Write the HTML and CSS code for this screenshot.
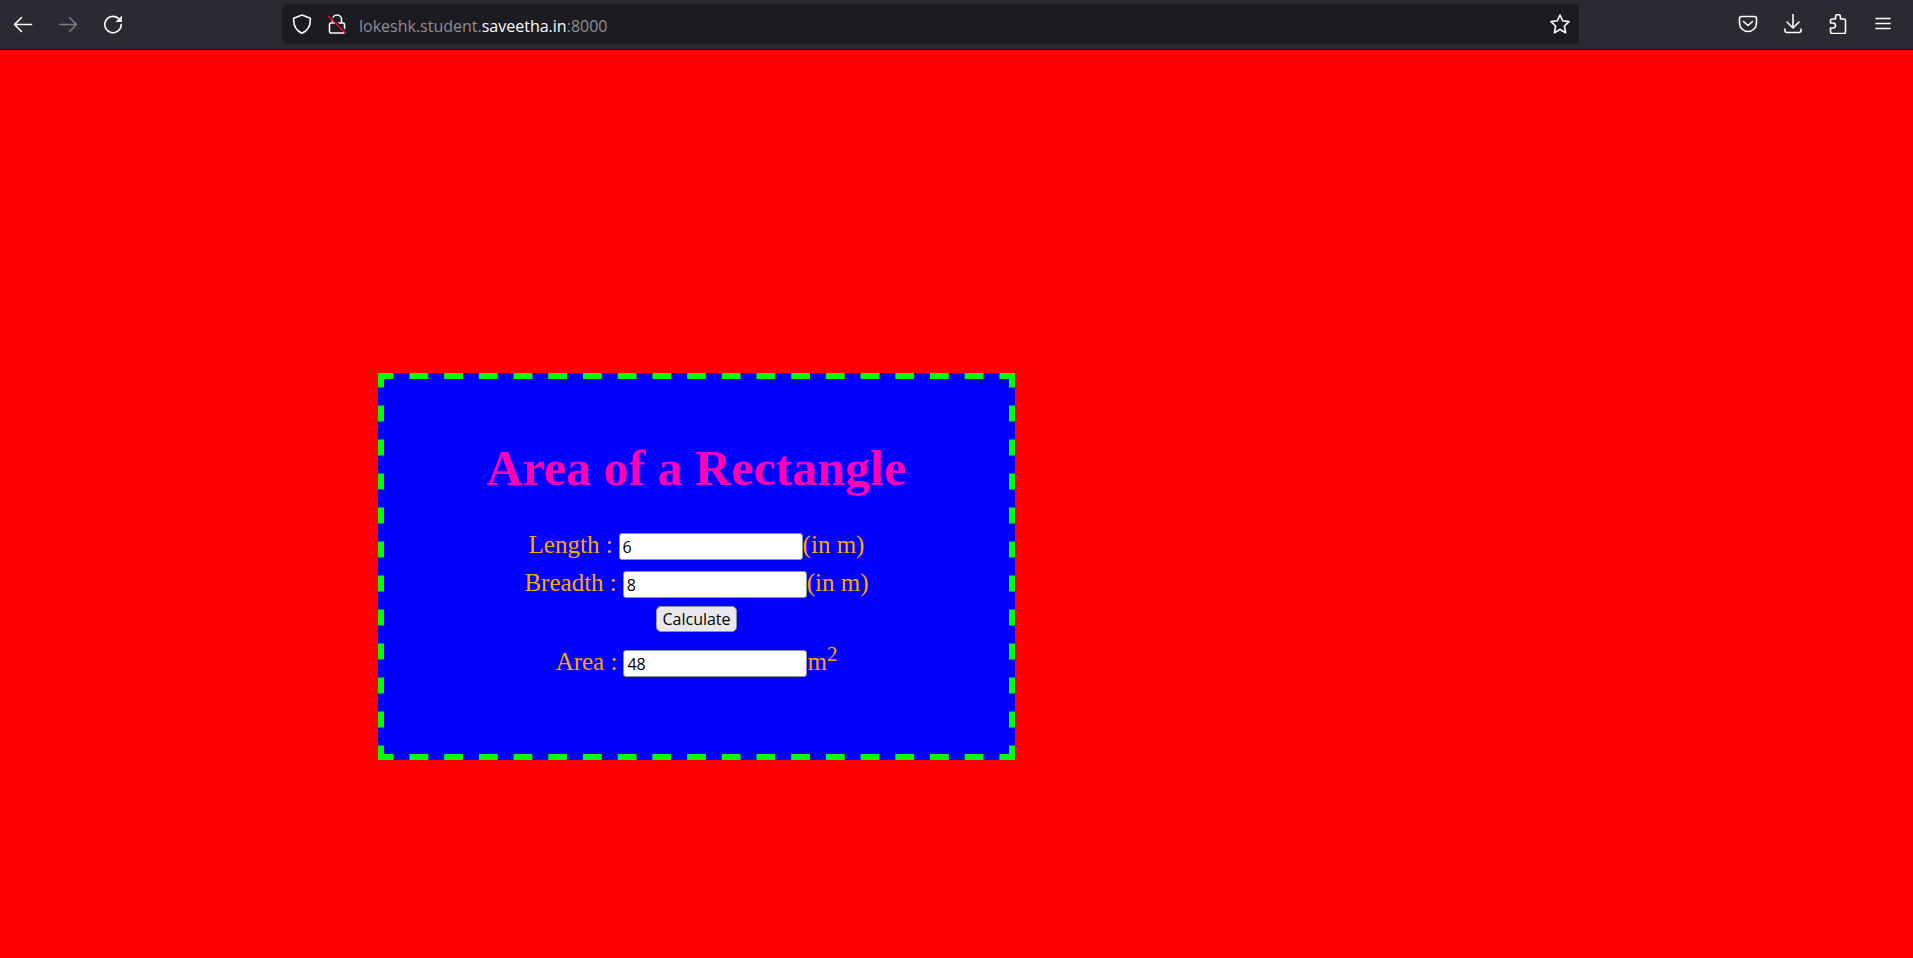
FILE: index.html
```html
<!DOCTYPE html>
<html lang="en">
<head>
<meta charset="utf-8">
<title>Area of a Rectangle</title>
<link rel="stylesheet" href="styles.css">
</head>
<body>
<header class="toolbar">
  <nav class="nav-buttons" aria-label="History">
    <button class="icon-button" type="button" aria-label="Back">
      <svg class="icon" viewBox="0 0 20 20"><path d="M18.500 10.500H2M8.500 3.500l-7 7 7 7"/></svg>
    </button>
    <button class="icon-button" type="button" aria-label="Forward" disabled>
      <svg class="icon" viewBox="0 0 20 20"><path d="M1.500 10.500H18M11.500 3.500l7 7-7 7"/></svg>
    </button>
    <button class="icon-button" type="button" aria-label="Reload">
      <svg class="icon" viewBox="0 0 20 20"><path d="M18.200 10.500a8.200 8.200 0 1 1-2.800-6.100"/><path class="solid" d="M19 1.500V8h-6.500z"/></svg>
    </button>
  </nav>
  <div class="address-bar">
    <button class="icon-button" type="button" aria-label="Tracking protection">
      <svg class="icon" viewBox="0 0 20 20"><path d="M10 .9 18.300 4.200C18.700 11 16 16.500 10 19.200 4 16.500 1.300 11 1.700 4.200z"/></svg>
    </button>
    <button class="icon-button" type="button" aria-label="Connection not secure">
      <svg class="icon" viewBox="0 0 20 20"><path d="M5.500 9V5.500a4.500 4.500 0 0 1 9 0V9M4 9h12q1.500 0 1.500 1.500v7q0 1.500-1.500 1.500H4q-1.500 0-1.500-1.500v-7Q2.500 9 4 9z"/><path class="strike-gap" d="M2.500 1.500 19.500 18"/><path class="strike" d="M1.500 2.500 18.500 19"/></svg>
    </button>
    <a class="url" href="#">lokeshk.student.<span class="domain">saveetha.in</span>:8000</a>
    <button class="icon-button" type="button" aria-label="Bookmark this page">
      <svg class="icon" viewBox="0 0 20 20"><path d="M10 1 12.700 6.800 19 7.600 14.400 12 15.600 18.700 10 15.500 4.400 18.700 5.600 12 1 7.600 7.300 6.800z"/></svg>
    </button>
  </div>
  <div class="tools">
    <button class="icon-button" type="button" aria-label="Save to Pocket">
      <svg class="icon" viewBox="0 0 20 20"><path d="M3.500 2.500h13q2 0 2 2V9a8.500 8.500 0 0 1-17 0V4.500q0-2 2-2zM5.500 7.500l4.500 4 4.500-4"/></svg>
    </button>
    <button class="icon-button" type="button" aria-label="Downloads">
      <svg class="icon" viewBox="0 0 20 20"><path d="M10 .5v13M4 8l6 6 6-6M2 15v1.500q0 2 2 2h12q2 0 2-2V15"/></svg>
    </button>
    <button class="icon-button" type="button" aria-label="Extensions">
      <svg class="icon" viewBox="0 0 20 20"><path d="M2.500 9V6.500q0-1.500 1.500-1.500h3.500V3a2.500 2.500 0 0 1 5 0v2H16q1.500 0 1.500 1.500V18q0 1.500-1.500 1.500H4q-1.500 0-1.500-1.500v-4H5a2.500 2.500 0 0 0 0-5z"/></svg>
    </button>
    <button class="icon-button" type="button" aria-label="Open menu">
      <svg class="icon" viewBox="0 0 20 20"><path d="M3 4.500h14M3 9.500h14M3 14.500h14"/></svg>
    </button>
  </div>
</header>
<main class="page">
  <form class="card">
    <h1 class="title">Area of a Rectangle</h1>
    <div class="row">
      <label for="length">Length :</label>
      <input class="field" id="length" type="text" value="6">
      <span>(in m)</span>
    </div>
    <div class="row">
      <label for="breadth">Breadth :</label>
      <input class="field" id="breadth" type="text" value="8">
      <span>(in m)</span>
    </div>
    <div class="row row-action">
      <button class="calculate" type="button">Calculate</button>
    </div>
    <div class="row">
      <label for="area">Area :</label>
      <input class="field" id="area" type="text" value="48">
      <span>m<sup>2</sup></span>
    </div>
  </form>
</main>
</body>
</html>
```
FILE: styles.css
```css
* {
  box-sizing: border-box;
}

body {
  margin: 0;
  min-height: 100vh;
  display: flex;
  flex-direction: column;
  background: #ff0000;
  font-family: "Liberation Serif", "Times New Roman", serif;
}

.toolbar {
  display: flex;
  align-items: center;
  height: 50px;
  padding: 0 15px 1px 8px;
  background: #2b2a33;
  border-bottom: 1px solid #0c0c0d;
}

.nav-buttons,
.tools {
  display: flex;
  gap: 15px;
}

.nav-buttons {
  margin-right: 154px;
}

.tools {
  margin-left: 154px;
}

.icon-button {
  display: flex;
  align-items: center;
  justify-content: center;
  width: 30px;
  height: 30px;
  padding: 0;
  border: 0;
  background: none;
  color: #fbfbfe;
}

.icon-button:disabled {
  color: #7a7980;
}

.icon {
  width: 20px;
  height: 20px;
  fill: none;
  stroke: currentColor;
  stroke-width: 1.6;
  stroke-linecap: round;
  stroke-linejoin: round;
}

.icon .solid {
  fill: currentColor;
  stroke: none;
}

.icon .strike {
  stroke: #e50c3b;
}

.icon .strike-gap {
  stroke: #1c1b22;
}

.address-bar {
  flex: 1;
  display: flex;
  align-items: center;
  gap: 5px;
  height: 40px;
  padding: 0 4px 0 5px;
  border-radius: 5px;
  background: #1c1b22;
}

.url {
  flex: 1;
  margin-left: 2px;
  padding-top: 3px;
  color: #8f8f95;
  font: 16px/24px "Open Sans", "Noto Sans", sans-serif;
  text-decoration: none;
}

.domain {
  color: #fbfbfe;
}

.page {
  flex: 1;
  padding: 323px 0 0 378px;
}

/* Dashed frame: one repeating tile per side, centred so the corners meet. */
.card {
  --dash: #00ff00;
  --across: linear-gradient(90deg, transparent 24%, var(--dash) 24% 76%, transparent 76%);
  --down: linear-gradient(var(--dash) 24%, transparent 24% 76%, var(--dash) 76%);
  width: 41.500%;
  padding: 66px 6px 79px;
  background:
    var(--across) center top / 5.450% 6px repeat-x,
    var(--across) center bottom / 5.450% 6px repeat-x,
    var(--down) left center / 6px 34px repeat-y,
    var(--down) right center / 6px 34px repeat-y,
    #0000ff;
  color: orange;
  font-size: 25px;
}

.title {
  margin: 0 0 29px;
  color: #ff00b3;
  font-size: 50px;
  line-height: 58px;
  text-align: center;
}

.row {
  display: flex;
  align-items: baseline;
  justify-content: center;
  height: 38px;
  line-height: 38px;
}

.row-action {
  align-items: flex-start;
  height: 41px;
  padding-top: 4px;
}

.row sup {
  font-size: 21px;
  line-height: 0;
}

.field {
  width: 184px;
  height: 27px;
  margin-left: 6px;
  padding: 2px 3px 0;
  border: 1px solid #8f8f9d;
  border-radius: 3px;
  background: #ffffff;
  color: #000000;
  font: 16px/22px "Open Sans", "Noto Sans", sans-serif;
}

.calculate {
  height: 26px;
  padding: 0 5px;
  border: 1px solid #8f8f9d;
  border-radius: 5px;
  background: #e9e9ed;
  color: #000000;
  font: 16px/24px "Open Sans", "Noto Sans", sans-serif;
}
```
